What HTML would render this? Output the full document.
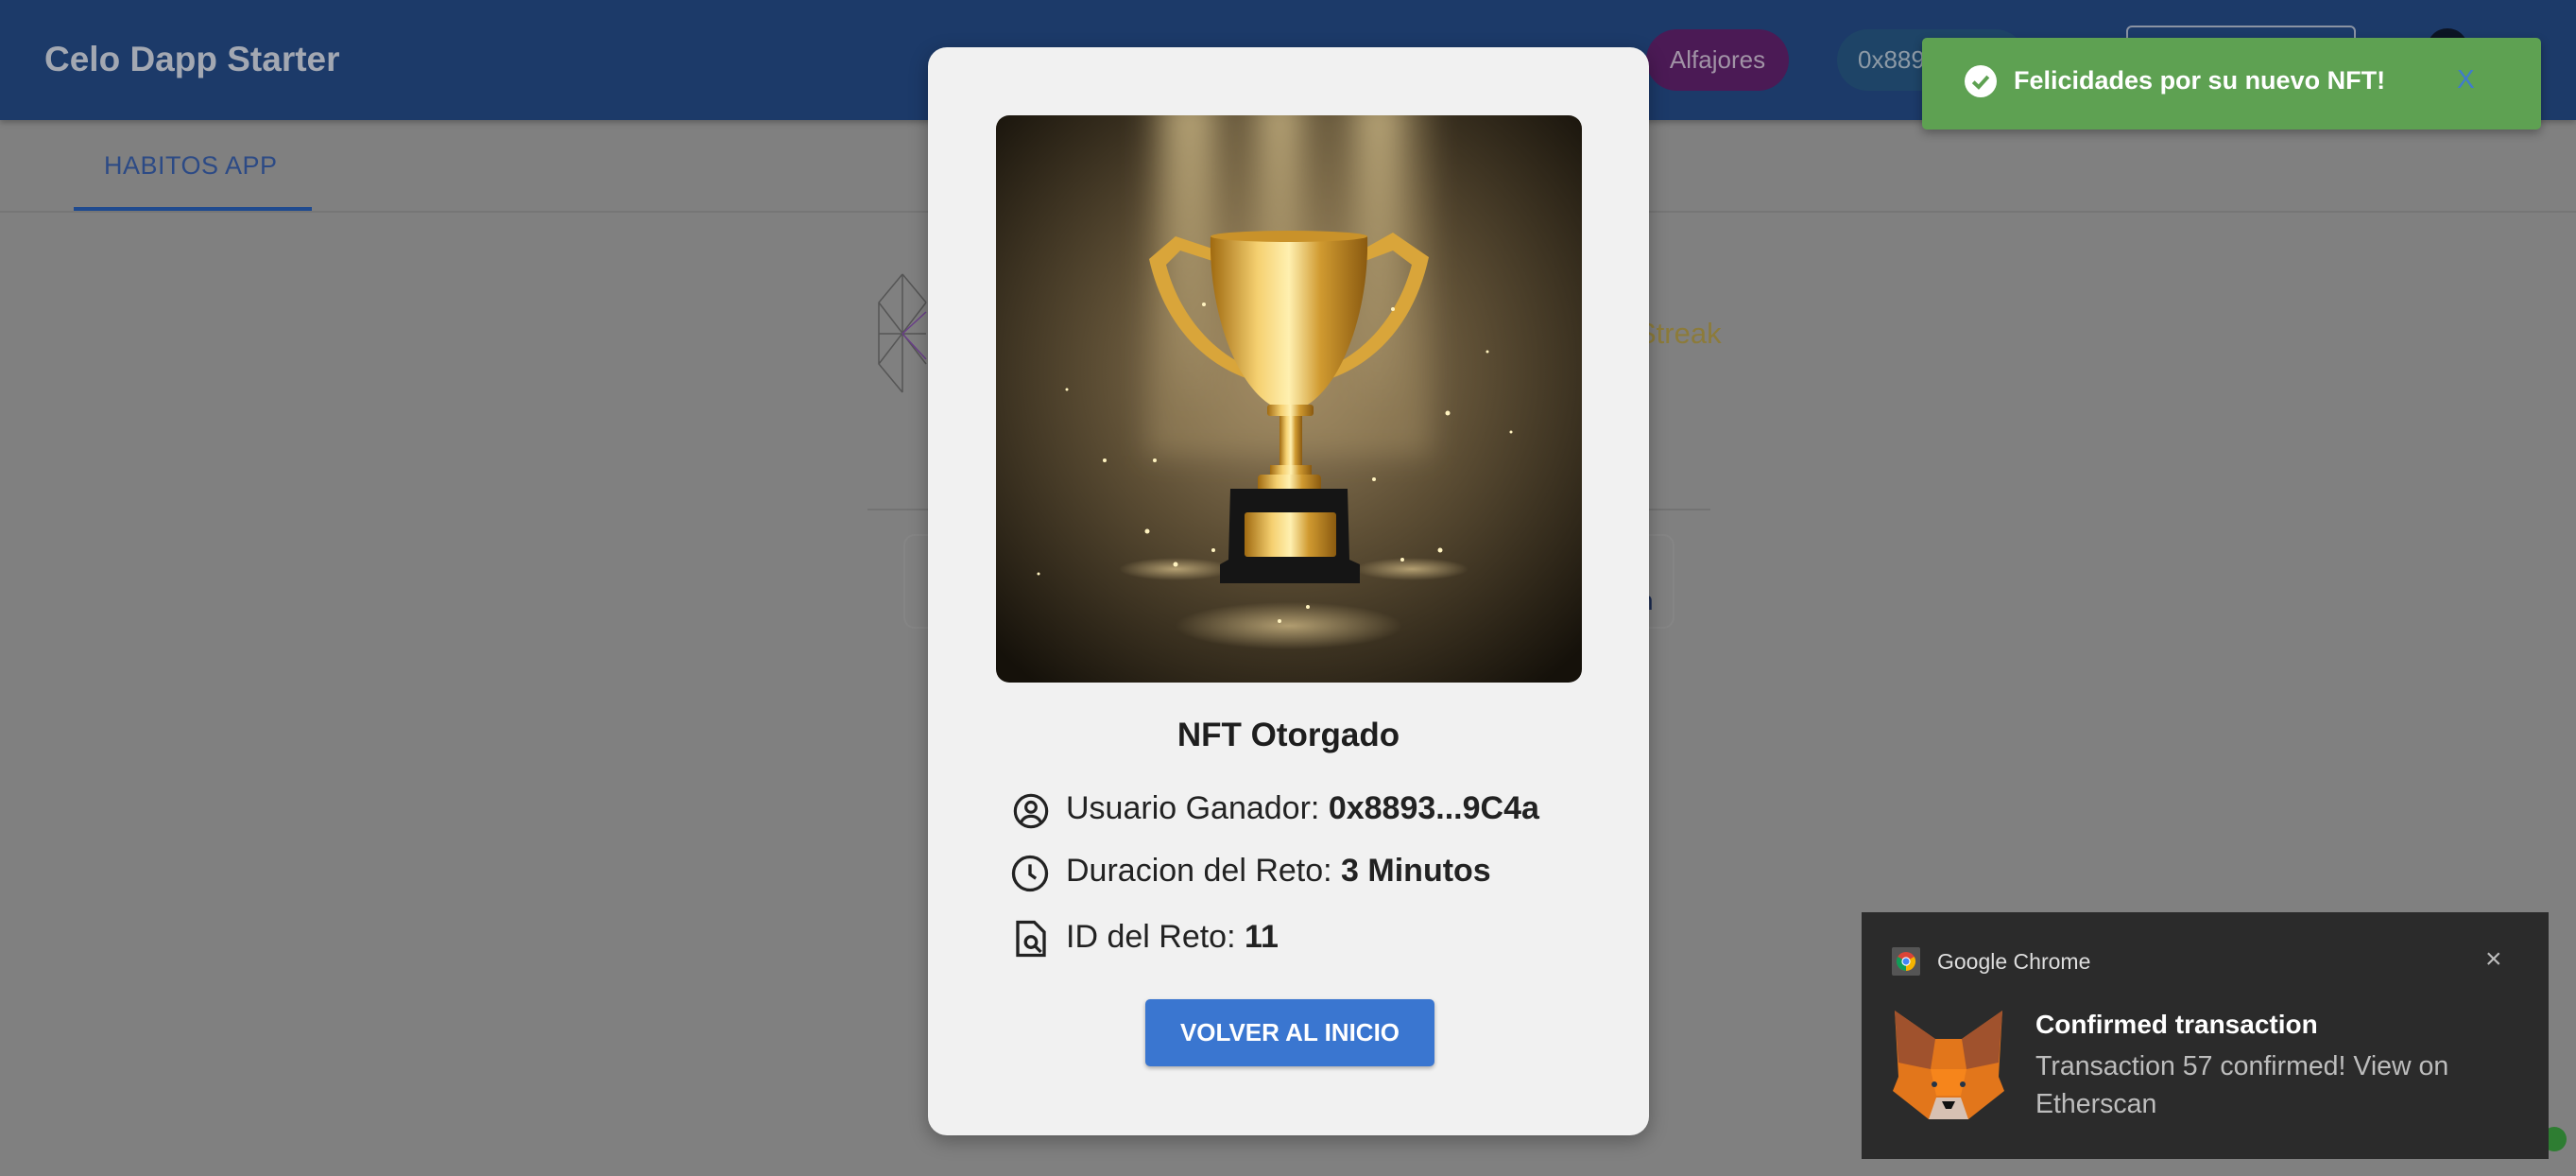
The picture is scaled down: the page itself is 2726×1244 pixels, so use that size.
<!DOCTYPE html>
<html><head><meta charset="utf-8">
<style>
*{margin:0;padding:0;box-sizing:border-box}
body{width:2726px;height:1244px;overflow:hidden;background:#808080;font-family:"Liberation Sans",Arial,sans-serif;position:relative}
.abs{position:absolute}
</style></head><body>
<!-- header -->
<div class="abs" style="left:0;top:0;width:2726px;height:127px;background:#1c3a69;box-shadow:0 3px 6px rgba(0,0,0,.25)"></div>
<div class="abs" style="left:47px;top:42px;font-size:37px;font-weight:bold;color:#a3a8b2">Celo Dapp Starter</div>
<div class="abs" style="left:1742px;top:31px;width:151px;height:65px;border-radius:33px;background:#4b1a55;color:#a193a6;font-size:26px;line-height:65px;text-align:center">Alfajores</div>
<div class="abs" style="left:1944px;top:31px;width:200px;height:65px;border-radius:33px;background:#1e4467;color:#8d9aa6;font-size:26px;line-height:65px;padding-left:22px">0x889</div>
<div class="abs" style="left:2250px;top:27px;width:243px;height:60px;border:2px solid #8a93a3;border-radius:6px"></div>
<div class="abs" style="left:2568px;top:30px;width:44px;height:44px;border-radius:50%;background:#0c1424"></div>
<!-- tabs -->
<div class="abs" style="left:110px;top:160px;font-size:27px;color:#2c4a85;letter-spacing:.5px">HABITOS APP</div>
<div class="abs" style="left:78px;top:219px;width:252px;height:4px;background:#1f4a8f"></div>
<div class="abs" style="left:0;top:223px;width:2726px;height:2px;background:#767676"></div>
<!-- background content -->
<svg class="abs" style="left:925px;top:285px" width="60" height="135" viewBox="0 0 60 135"><g fill="none" stroke="#555" stroke-width="1.5"><path d="M30 5 L5 35 L5 100 L30 130 M30 5 L55 35 M5 35 L55 100 M5 100 L55 35 M30 5 L30 130 M5 68 L55 68"/></g><path d="M30 68 L55 45 M30 68 L55 95" stroke="#6a3e8a" stroke-width="1.5"/></svg>
<div class="abs" style="left:1732px;top:335px;font-size:31px;color:#8c7b3a">Streak</div>
<div class="abs" style="left:918px;top:538px;width:892px;height:2px;background:#737373"></div>
<div class="abs" style="left:956px;top:565px;width:816px;height:100px;border:2px solid #858585;border-radius:12px"></div>
<div class="abs" style="left:1734px;top:620px;font-size:28px;color:#1a2a50">n</div>
<div class="abs" style="left:2690px;top:1192px;width:26px;height:26px;border-radius:50%;background:#2e7d32"></div>
<!-- modal -->
<div class="abs" style="left:982px;top:50px;width:763px;height:1151px;background:#f1f1f1;border-radius:20px;box-shadow:0 6px 20px rgba(0,0,0,.3)"></div>
<svg class="abs" style="left:1054px;top:122px;border-radius:14px" width="620" height="600" viewBox="0 0 620 600">
<defs>
<radialGradient id="bg" cx="0.5" cy="0.45" r="0.7"><stop offset="0" stop-color="#9a8460"/><stop offset="0.45" stop-color="#5e4f35"/><stop offset="1" stop-color="#15110a"/></radialGradient>
<linearGradient id="ray" x1="0" y1="0" x2="0" y2="1"><stop offset="0" stop-color="#e8d29a" stop-opacity=".6"/><stop offset="1" stop-color="#e8d29a" stop-opacity="0"/></linearGradient>
<linearGradient id="gold" x1="0" y1="0" x2="1" y2="0"><stop offset="0" stop-color="#a06a10"/><stop offset=".3" stop-color="#f5d070"/><stop offset=".5" stop-color="#fff0b0"/><stop offset=".7" stop-color="#d09a30"/><stop offset="1" stop-color="#8a5a10"/></linearGradient>
<radialGradient id="floor" cx=".5" cy=".5" r=".5"><stop offset="0" stop-color="#e0c890" stop-opacity=".7"/><stop offset="1" stop-color="#e0c890" stop-opacity="0"/></radialGradient>
<filter id="blur" x="-50%" y="-10%" width="200%" height="120%"><feGaussianBlur stdDeviation="14"/></filter>
</defs>
<rect width="620" height="600" fill="url(#bg)"/>
<g filter="url(#blur)">
<rect x="160" y="-20" width="300" height="380" fill="#b8a070" opacity=".35"/>
<rect x="180" y="-20" width="50" height="330" fill="url(#ray)"/>
<rect x="278" y="-20" width="45" height="280" fill="url(#ray)"/>
<rect x="380" y="-20" width="50" height="330" fill="url(#ray)"/>
</g>
<ellipse cx="310" cy="540" rx="120" ry="25" fill="url(#floor)"/>
<ellipse cx="190" cy="480" rx="60" ry="12" fill="url(#floor)"/>
<ellipse cx="440" cy="480" rx="60" ry="12" fill="url(#floor)"/>
<path d="M232 142 L190 128 L162 152 C175 210 210 260 270 280 L272 268 C225 250 192 205 180 158 L195 143 L232 155Z" fill="#d9a53a"/>
<path d="M388 142 L420 124 L458 150 C445 210 410 260 350 280 L348 268 C395 250 428 205 440 158 L420 143 L388 155Z" fill="#d9a53a"/>
<path d="M227 128 L393 128 C395 200 370 280 330 306 L290 306 C250 280 225 200 227 128Z" fill="url(#gold)"/>
<ellipse cx="310" cy="128" rx="83" ry="6" fill="#c9922a"/>
<rect x="287" y="306" width="49" height="12" rx="3" fill="url(#gold)"/>
<rect x="300" y="318" width="24" height="55" fill="url(#gold)"/>
<rect x="290" y="370" width="44" height="12" fill="url(#gold)"/>
<rect x="277" y="380" width="67" height="18" rx="4" fill="url(#gold)"/>
<path d="M248 395 L372 395 L374 470 L385 475 L385 495 L237 495 L237 475 L246 470Z" fill="#151515"/>
<rect x="263" y="420" width="97" height="47" rx="3" fill="url(#gold)"/>
<g fill="#fff3c0"><circle cx="220" cy="200" r="2"/><circle cx="420" cy="205" r="2"/><circle cx="478" cy="315" r="2.5"/><circle cx="115" cy="365" r="2"/><circle cx="168" cy="365" r="2"/><circle cx="160" cy="440" r="2.5"/><circle cx="190" cy="475" r="2.5"/><circle cx="470" cy="460" r="2.5"/><circle cx="400" cy="385" r="2"/><circle cx="230" cy="460" r="2"/><circle cx="330" cy="520" r="2"/><circle cx="430" cy="470" r="2"/><circle cx="75" cy="290" r="1.5"/><circle cx="520" cy="250" r="1.5"/><circle cx="545" cy="335" r="1.5"/><circle cx="45" cy="485" r="1.5"/><circle cx="300" cy="535" r="2"/></g>
</svg>
<div class="abs" style="left:982px;top:758px;width:763px;text-align:center;font-size:35px;font-weight:bold;color:#1e1e1e">NFT Otorgado</div>
<svg class="abs" style="left:1071px;top:838px" width="40" height="40" viewBox="0 0 24 24" fill="none" stroke="#222" stroke-width="1.9"><circle cx="12" cy="12" r="10"/><circle cx="12" cy="9.5" r="3.2"/><path d="M5.8 19c1.2-2.5 3.5-3.8 6.2-3.8s5 1.3 6.2 3.8"/></svg>
<div class="abs" style="left:1128px;top:836px;font-size:34px;color:#222">Usuario Ganador: <b>0x8893...9C4a</b></div>
<svg class="abs" style="left:1069px;top:903px" width="42" height="42" viewBox="0 0 24 24" fill="none" stroke="#222" stroke-width="1.9"><circle cx="12" cy="12" r="10"/><path d="M12 6.5V12.5L15.5 15"/></svg>
<div class="abs" style="left:1128px;top:902px;font-size:34px;color:#222">Duracion del Reto: <b>3 Minutos</b></div>
<svg class="abs" style="left:1073px;top:972px" width="36" height="42" viewBox="0 0 20 24" fill="none" stroke="#222" stroke-width="1.9"><path d="M2 2H12L18 8V22H2Z"/><circle cx="10" cy="14" r="3.3"/><path d="M12.5 16.5L16 20"/></svg>
<div class="abs" style="left:1128px;top:972px;font-size:34px;color:#222">ID del Reto: <b>11</b></div>
<div class="abs" style="left:1212px;top:1057px;width:306px;height:71px;background:#3a76d0;border-radius:5px;box-shadow:0 2px 4px rgba(0,0,0,.3);color:#fff;font-weight:bold;font-size:26px;line-height:71px;text-align:center">VOLVER AL INICIO</div>
<!-- toast -->
<div class="abs" style="left:2034px;top:40px;width:655px;height:97px;background:#5ea152;border-radius:5px;box-shadow:0 4px 10px rgba(0,0,0,.3)"></div>
<svg class="abs" style="left:2079px;top:69px" width="34" height="34" viewBox="0 0 24 24"><circle cx="12" cy="12" r="12" fill="#fff"/><path d="M6.5 12.5L10.5 16.3L17.5 8.5" fill="none" stroke="#5ea152" stroke-width="2.8"/></svg>
<div class="abs" style="left:2131px;top:70px;font-size:27px;font-weight:bold;color:#fff">Felicidades por su nuevo NFT!</div>
<div class="abs" style="left:2600px;top:68px;font-size:28px;color:#3f7ad0">X</div>
<!-- chrome notification -->
<div class="abs" style="left:1970px;top:965px;width:727px;height:261px;background:#2b2b2b"></div>
<div class="abs" style="left:2002px;top:1002px;width:30px;height:30px;background:#555;border-radius:2px"></div>
<svg class="abs" style="left:2005px;top:1005px" width="24" height="24" viewBox="0 0 24 24"><circle cx="12" cy="12" r="10" fill="#db4437"/><path d="M12 12L3.3 7A10 10 0 0 0 12 22Z" fill="#0f9d58"/><path d="M12 12L12 22A10 10 0 0 0 20.7 7Z" fill="#f4b400"/><circle cx="12" cy="12" r="4.6" fill="#fff"/><circle cx="12" cy="12" r="3.5" fill="#4285f4"/></svg>
<div class="abs" style="left:2050px;top:1004px;font-size:23px;color:#ddd">Google Chrome</div>
<div class="abs" style="left:2630px;top:998px;font-size:30px;color:#bbb">×</div>
<svg class="abs" style="left:2003px;top:1069px" width="118" height="115" viewBox="0 0 118 115"><path d="M2 0L45 30H73L116 0L112 70L118 85L80 115H38L0 85L6 70Z" fill="#e2761b"/><path d="M2 0L45 30L40 62L6 55Z" fill="#a0522d"/><path d="M116 0L73 30L78 62L112 55Z" fill="#a0522d"/><path d="M40 62L78 62L72 90H46Z" fill="#f6851b"/><path d="M38 115L46 92H72L80 115Z" fill="#d7c1b3"/><path d="M52 96H66L62 104H56Z" fill="#111"/><circle cx="44" cy="78" r="3" fill="#233447"/><circle cx="74" cy="78" r="3" fill="#233447"/></svg>
<div class="abs" style="left:2154px;top:1068px;font-size:28px;font-weight:bold;color:#fff">Confirmed transaction</div>
<div class="abs" style="left:2154px;top:1108px;font-size:28.5px;color:#bdbdbd;line-height:40px">Transaction 57 confirmed! View on<br>Etherscan</div>
</body></html>
